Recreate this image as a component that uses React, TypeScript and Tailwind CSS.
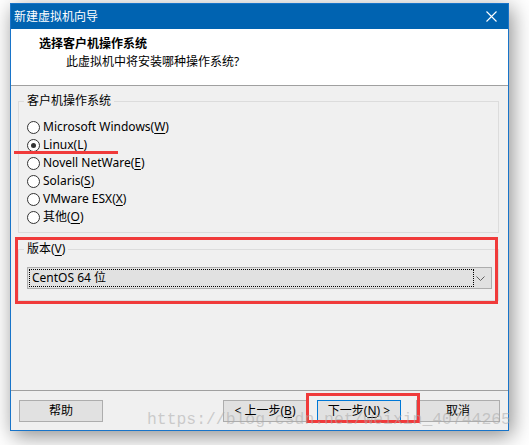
const FONT = "font-['Segoe_UI','Noto_Sans','Noto_Sans_CJK_SC',sans-serif]";

const OS_OPTIONS = [
  { pre: 'Microsoft Windows(', key: 'W', post: ')' },
  { pre: 'Linux(', key: 'L', post: ')', checked: true },
  { pre: 'Novell NetWare(', key: 'E', post: ')' },
  { pre: 'Solaris(', key: 'S', post: ')' },
  { pre: 'VMware ESX(', key: 'X', post: ')' },
  { pre: '其他(', key: 'O', post: ')' },
];

function Radio({ checked }: { checked?: boolean }) {
  return (
    <span className="flex h-[13px] w-[13px] shrink-0 items-center justify-center rounded-full border border-[#333] bg-white">
      {checked && <span className="h-[5px] w-[5px] rounded-full bg-[#333]" />}
    </span>
  );
}

function Btn({ children, focused }: { children: React.ReactNode; focused?: boolean }) {
  return (
    <div
      className={`flex h-[22px] w-[84px] items-center justify-center border bg-[#e1e1e1] text-[12px] leading-none text-black ${
        focused ? 'border-[#0078d7]' : 'border-[#adadad]'
      }`}
    >
      {children}
    </div>
  );
}

export default function App() {
  return (
    <div className={`relative h-[445px] w-[529px] overflow-hidden bg-white pl-[10px] pt-[3px] ${FONT}`}>
      {/* window */}
      <div className="flex h-[428px] w-[499px] flex-col border border-[#1874c9] bg-[#f0f0f0] shadow-[3px_5px_20px_rgba(0,0,0,0.45)]">
        {/* title bar */}
        <div className="flex h-[25px] items-center justify-between bg-[#0063b1] pl-[3px] pr-[11px] text-[12px] text-white">
          <span>新建虚拟机向导</span>
          <svg width="11" height="11" viewBox="0 0 11 11">
            <path d="M0.5 0.5 L10.5 10.5 M10.5 0.5 L0.5 10.5" stroke="white" strokeWidth="1.1" />
          </svg>
        </div>

        {/* header */}
        <div className="h-[57px] border-b border-[#a0a0a0] bg-white pt-[7px] text-[12px] leading-[16px] text-black">
          <div className="pl-[28px] font-bold">选择客户机操作系统</div>
          <div className="mt-[2px] pl-[55px]">此虚拟机中将安装哪种操作系统?</div>
        </div>

        {/* body */}
        <div className="flex flex-1 flex-col border-b border-[#a0a0a0] pt-[7px] text-[12px] leading-[16px] text-black">
          <fieldset className="ml-[7px] w-[481px] border border-[#dcdcdc] pb-[6px]">
            <legend className="ml-[5px] px-[3px]">客户机操作系统</legend>
            <div className="flex flex-col pl-[8px] pt-[9px]">
              {OS_OPTIONS.map((o) => (
                <div key={o.key} className="flex h-[18px] items-center gap-[3px]">
                  <Radio checked={o.checked} />
                  <span>
                    {o.pre}
                    <span className="underline underline-offset-2">{o.key}</span>
                    {o.post}
                  </span>
                </div>
              ))}
            </div>
          </fieldset>

          <fieldset className="ml-[7px] mt-[8px] w-[481px] border border-[#dcdcdc] pb-[11px]">
            <legend className="ml-[5px] px-[3px]">
              版本(<span className="underline underline-offset-2">V</span>)
            </legend>
            <div className="ml-[8px] mt-[10px] flex h-[22px] w-[465px] items-center border border-[#adadad] bg-[#e1e1e1] p-px">
              <div className="flex h-full w-[445px] items-center border border-dotted border-black pl-[2px]">
                CentOS 64 位
              </div>
              <svg className="ml-auto mr-[5px]" width="9" height="5" viewBox="0 0 9 5">
                <path d="M0.5 0.5 L4.5 4.5 L8.5 0.5" fill="none" stroke="#606060" strokeWidth="1" />
              </svg>
            </div>
          </fieldset>
        </div>

        {/* buttons */}
        <div className="flex h-[39px] items-start pl-[8px] pr-[8px] pt-[9px]">
          <Btn>帮助</Btn>
          <div className="ml-auto flex gap-[10px]">
            <Btn>&lt; 上一步(<span className="underline underline-offset-2">B</span>)</Btn>
            <Btn focused>下一步(<span className="underline underline-offset-2">N</span>) &gt;</Btn>
          </div>
          <div className="ml-[15px]">
            <Btn>取消</Btn>
          </div>
        </div>
      </div>

      {/* annotations */}
      <div className="absolute left-[14px] top-[151px] h-[3px] w-[104px] bg-[#f03a3a]" />
      <div className="absolute left-[15px] top-[237px] h-[67px] w-[483px] border-[3px] border-[#f03a3a]" />
      <div className="absolute left-[306px] top-[393px] h-[30px] w-[114px] border-[3px] border-[#f03a3a]" />

      {/* watermark */}
      <div className="absolute left-[147px] top-[410px] font-['Liberation_Mono',monospace] text-[16.4px] leading-[20px] text-[rgba(170,170,170,0.55)]">
        https://blog.csdn.net/weixin_40744265
      </div>
    </div>
  );
}
